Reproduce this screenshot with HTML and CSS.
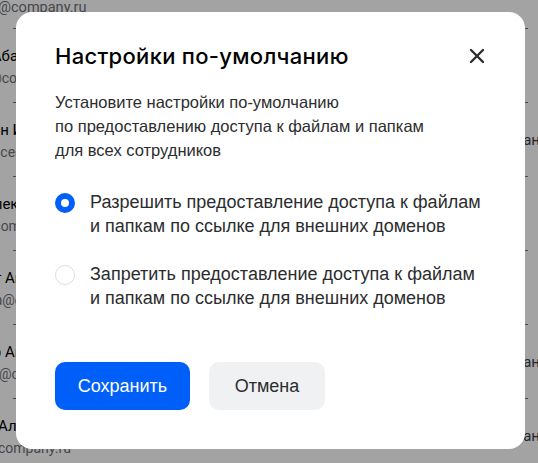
FILE: index.html
```html
<!DOCTYPE html>
<html lang="ru">
<head>
<meta charset="utf-8">
<title>Настройки по-умолчанию</title>
<link rel="stylesheet" href="styles.css">
</head>
<body>
<div class="page">
  <div class="top-email">@company.ru</div>
  <ul class="list">
    <li class="row"><div class="person shift-1"><span class="name">Иван Абаев</span><span class="email">abaev@company.ru</span></div><span class="role"></span></li>
    <li class="row"><div class="person shift-2"><span class="name">Степан Иванов</span><span class="email">lawrence@company.ru</span></div><span class="role">ан</span></li>
    <li class="row"><div class="person shift-3"><span class="name">Иван Алексеев</span><span class="email">ivan.a@company.ru</span></div><span class="role"></span></li>
    <li class="row"><div class="person shift-4"><span class="name">Олег Антонов</span><span class="email">olega@company.ru</span></div><span class="role"></span></li>
    <li class="row"><div class="person shift-5"><span class="name">Петр Андреев</span><span class="email">petra@company.ru</span></div><span class="role">ан</span></li>
    <li class="row"><div class="person shift-6"><span class="name">Алина Смирнова</span><span class="email">company.ru</span></div><span class="role">ан</span></li>
  </ul>
</div>
<div class="overlay"></div>
<div class="modal" role="dialog">
  <div class="modal-head">
    <h2 class="title">Настройки по-умолчанию</h2>
    <button class="close" aria-label="Закрыть">
      <svg width="16" height="16" viewBox="0 0 16 16"><path d="M2 2L14 14M14 2L2 14" stroke="#2c2d2e" stroke-width="2.4" stroke-linecap="round"/></svg>
    </button>
  </div>
  <p class="desc">Установите настройки по-умолчанию<br>по предоставлению доступа к файлам и папкам<br>для всех сотрудников</p>
  <div class="options">
    <label class="option"><span class="radio checked"></span><span class="opt-text">Разрешить предоставление доступа к файлам<br>и папкам по ссылке для внешних доменов</span></label>
    <label class="option"><span class="radio"></span><span class="opt-text">Запретить предоставление доступа к файлам<br>и папкам по ссылке для внешних доменов</span></label>
  </div>
  <div class="actions">
    <button class="btn primary">Сохранить</button>
    <button class="btn secondary">Отмена</button>
  </div>
</div>
</body>
</html>
```
FILE: styles.css
```css
* { box-sizing: border-box; }
html, body { margin: 0; padding: 0; }
body {
  width: 538px;
  height: 463px;
  overflow: hidden;
  background: #ffffff;
  font-family: "Liberation Sans", Arial, sans-serif;
  color: #2c2d2e;
}
.page { position: relative; }
.top-email {
  font-family: Roboto, sans-serif;
  font-size: 14.5px;
  color: #6f7178;
  line-height: 16px;
  margin-left: -2px;
}
.list { list-style: none; margin: 0; padding: 0; }
.row {
  height: 74px;
  margin-left: 13px;
  width: 515px;
  border-top: 1px solid #6d7885;
  display: flex;
  align-items: center;
  justify-content: space-between;
}
.row:first-child { margin-top: 12px; }
.person {
  display: flex;
  flex-direction: column;
  gap: 4px;
  width: 80px;
  overflow: hidden;
  font-family: Roboto, sans-serif;
}
.name { font-size: 15px; color: #000; line-height: 20px; white-space: nowrap; }
.email { font-size: 14px; color: #6f7178; line-height: 16px; white-space: nowrap; }
.role { font-family: Roboto, sans-serif; font-size: 15px; color: #3a3d4a; margin-right: -12px; }
.shift-1 { margin-left: -61px; }
.shift-2 { margin-left: -54px; }
.shift-3 { margin-left: -69px; }
.shift-4 { margin-left: -45px; }
.shift-5 { margin-left: -46px; }
.shift-6 { margin-left: -15px; }

.overlay {
  position: fixed;
  inset: 0;
  background: rgba(0, 0, 0, 0.36);
}
.modal {
  position: fixed;
  left: 16px;
  top: 12px;
  width: 509px;
  height: 437px;
  background: #fff;
  border-radius: 16px;
  padding: 29px 39px 39px 39px;
  display: flex;
  flex-direction: column;
}
.modal-head {
  display: flex;
  justify-content: space-between;
  align-items: center;
}
.title {
  margin: 0;
  font-family: Inter, Roboto, sans-serif;
  font-size: 22px;
  font-weight: 500;
  line-height: 30px;
  color: #000;
  letter-spacing: 0.3px;
}
.close {
  border: 0;
  background: none;
  padding: 0;
  width: 16px;
  height: 16px;
  margin-right: 1px;
  display: flex;
}
.desc {
  margin: 19px 0 0;
  font-size: 16.5px;
  line-height: 24px;
  color: #2c2d2e;
}
.options {
  margin-top: 28px;
  display: flex;
  flex-direction: column;
  gap: 24px;
}
.option {
  display: flex;
  align-items: flex-start;
  gap: 15px;
}
.radio {
  flex: none;
  width: 20px;
  height: 20px;
  border-radius: 50%;
  border: 1.5px solid #dcdde2;
  margin-top: 3px;
}
.radio.checked {
  border: 6px solid #005ff9;
  background: #fff;
}
.opt-text {
  font-size: 18px;
  line-height: 24px;
  color: #2c2d2e;
}
.actions {
  margin-top: auto;
  display: flex;
  align-items: center;
  gap: 19px;
}
.btn {
  font-family: "Liberation Sans", Arial, sans-serif;
  font-size: 18px;
  border: 0;
  border-radius: 10px;
  height: 48px;
  padding: 0;
}
.primary { background: #005ff9; color: #fff; width: 135px; }
.secondary { background: #f0f1f3; color: #2c2d2e; width: 116px; }
```
